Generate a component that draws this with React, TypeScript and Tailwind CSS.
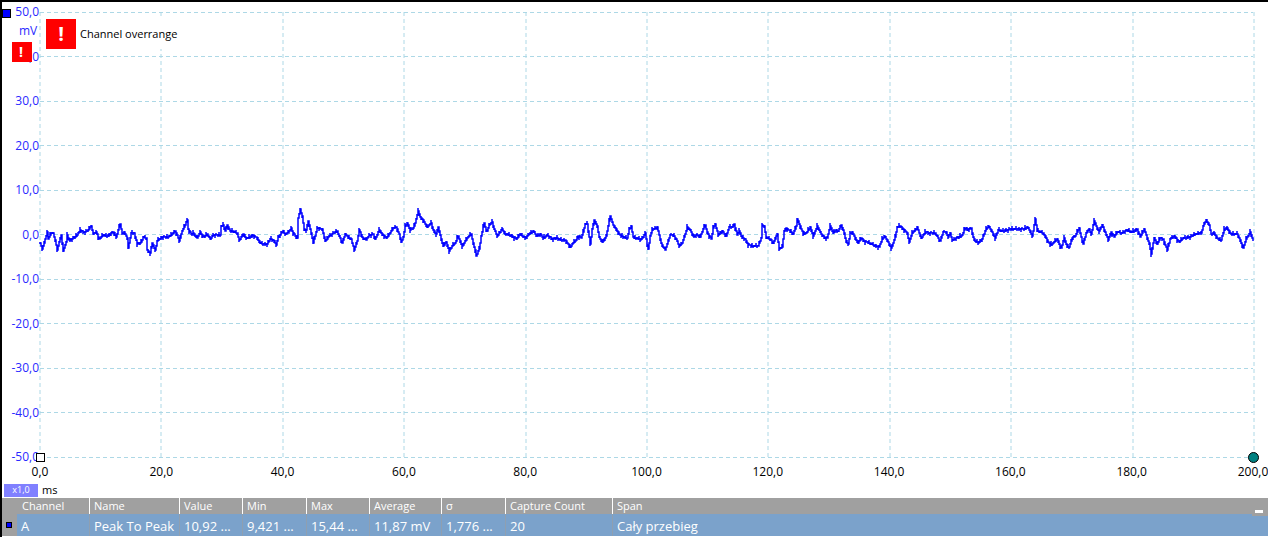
const SCALE_Y = ['50,0', '40,0', '30,0', '20,0', '10,0', '0,0', '-10,0', '-20,0', '-30,0', '-40,0', '-50,0']
const SCALE_X = ['0,0', '20,0', '40,0', '60,0', '80,0', '100,0', '120,0', '140,0', '160,0', '180,0', '200,0']

const PLOT_WIDTH = 1213
const PLOT_HEIGHT = 445

// x, distance below the zero line
const SAMPLES = [
    0,9, 2,15, 4,9, 7,-2, 8,5, 11,-1, 13,-1, 15,6, 17,16, 18,12, 21,1, 23,17, 26,8, 27,1, 29,6, 33,4, 37,1, 40,-4, 43,-2, 47,-3,
    51,-8, 53,0, 56,-2, 59,5, 63,1, 66,2, 70,0, 73,-2, 76,3, 78,-4, 80,-10, 82,-1, 84,-2, 87,4, 88,14, 91,-1, 94,-1, 97,10,
    101,8, 103,3, 106,4, 107,16, 110,19, 112,9, 115,16, 117,7, 122,3, 125,3, 128,3, 132,0, 135,-3, 137,1, 139,7, 142,-3, 144,-7,
    147,-14, 148,-5, 151,0, 153,-1, 157,4, 160,-2, 163,3, 167,0, 170,5, 173,1, 177,1, 180,1, 181,-8, 183,-9, 185,-3, 187,-9,
    190,-3, 193,-3, 197,-1, 199,6, 203,0, 206,4, 210,3, 213,1, 217,4, 220,9, 223,10, 227,10, 230,5, 233,6, 236,11, 238,3, 243,-3,
    245,0, 248,-1, 251,-6, 253,-1, 257,4, 258,-16, 260,-25, 262,-18, 264,-5, 266,-4, 268,-13, 271,-1, 273,9, 277,-6, 282,-5,
    285,7, 289,2, 293,-1, 297,-3, 299,2, 302,9, 305,0, 308,3, 311,5, 314,16, 317,7, 319,-4, 322,3, 326,6, 329,1, 333,0, 335,5,
    339,-4, 343,1, 346,4, 350,-1, 353,-6, 356,-7, 359,0, 361,8, 363,3, 365,-8, 367,-11, 370,-4, 373,-6, 375,-11, 377,-19, 378,-23,
    380,-17, 383,-14, 387,-7, 391,-11, 393,-4, 396,0, 398,-7, 401,5, 403,12, 406,8, 409,17, 412,12, 415,9, 418,2, 422,12, 424,9,
    427,4, 431,0, 433,9, 435,16, 436,22, 439,15, 441,2, 444,-11, 446,-4, 447,-3, 449,-9, 452,-12, 454,-5, 457,2, 462,-5, 465,0,
    470,1, 476,5, 480,0, 485,4, 489,0, 493,-3, 497,2, 500,0, 503,4, 507,1, 512,5, 517,4, 521,6, 525,6, 528,10, 530,13, 533,9,
    536,6, 538,2, 541,4, 543,-2, 545,-10, 547,-10, 549,3, 550,10, 552,-5, 554,-14, 557,-8, 559,3, 562,8, 566,2, 568,-8, 570,-18,
    573,-9, 576,-5, 579,0, 583,3, 587,4, 589,-5, 591,-8, 593,3, 597,4, 600,6, 603,3, 605,-1, 607,11, 608,15, 610,2, 612,-4,
    617,-7, 619,1, 621,9, 625,16, 628,7, 630,1, 633,1, 636,5, 639,12, 642,9, 645,0, 647,-7, 650,-4, 653,2, 657,1, 660,3, 663,-5,
    665,-9, 667,-2, 671,5, 673,-6, 675,-10, 678,1, 682,-3, 686,2, 689,-7, 692,-7, 694,-10, 697,1, 699,-3, 702,4, 705,5, 708,11,
    713,12, 718,12, 721,4, 722,-9, 724,-8, 726,3, 730,5, 733,9, 737,0, 739,15, 742,13, 744,-3, 746,-6, 750,-3, 753,0, 756,-8,
    757,-15, 760,-8, 763,0, 767,-2, 770,-7, 773,2, 777,-8, 781,0, 785,4, 787,4, 790,-8, 793,-1, 796,-4, 798,-3, 801,-9, 804,-1,
    806,8, 808,10, 810,-1, 812,-2, 815,4, 818,9, 821,4, 825,8, 828,8, 830,9, 833,11, 837,12, 839,13, 842,5, 844,2, 847,6, 851,14,
    853,9, 855,3, 857,-7, 860,-8, 863,-5, 867,-1, 869,8, 872,-1, 875,-4, 877,-7, 881,4, 885,-2, 890,-1, 895,-1, 898,4, 900,7,
    903,-2, 906,-2, 908,3, 910,-1, 912,6, 917,4, 922,1, 925,-6, 928,-4, 931,-6, 933,3, 935,7, 938,9, 942,5, 945,-3, 948,-8,
    951,-4, 955,4, 958,-4, 963,-3, 970,-5, 974,-5, 978,-5, 983,-5, 987,-7, 990,-3, 992,2, 994,-9, 995,-15, 997,-4, 1000,-2,
    1003,-1, 1006,4, 1010,11, 1013,9, 1017,5, 1021,14, 1024,4, 1027,13, 1029,13, 1032,4, 1035,2, 1039,-6, 1041,3, 1043,10,
    1046,-1, 1049,-5, 1051,0, 1054,-13, 1057,-6, 1059,-3, 1062,-9, 1065,-2, 1068,6, 1071,-2, 1074,3, 1077,-2, 1082,-1, 1087,-4,
    1092,-2, 1097,-5, 1100,3, 1104,-5, 1107,4, 1109,9, 1111,20, 1114,4, 1117,10, 1120,4, 1123,5, 1127,16, 1130,5, 1134,2,
    1139,8, 1143,4, 1150,3, 1155,0, 1161,-1, 1163,-8, 1166,-14, 1169,-9, 1171,0, 1174,-1, 1177,4, 1181,6, 1184,-5, 1187,-6,
    1191,0, 1197,0, 1200,6, 1203,14, 1206,5, 1210,-2, 1213,7,
]

// how far the noise reaches above and below the signal, per pixel column
const NOISE = [[1, 1], [3, 0], [0, 2], [1, 0], [2, 2], [0, 1], [1, 3], [2, 0], [0, 0], [1, 2], [3, 1], [0, 2], [1, 1]]

function tracePath() {
    let path = ''
    let step = 0
    for (let i = 0; i < SAMPLES.length - 2; i += 2) {
        const [x0, y0, x1, y1] = SAMPLES.slice(i, i + 4)
        for (let x = x0; x < x1; x++) {
            const y = Math.round(y0 + ((y1 - y0) * (x - x0)) / (x1 - x0) + PLOT_HEIGHT / 2 - 0.5)
            const [up, down] = NOISE[step % NOISE.length]
            path += path ? `H${x}` : `M${x} ${y}`
            path += `V${y - up}V${y + down}V${y}`
            step++
        }
    }
    return `${path}H${PLOT_WIDTH}V229`
}

const TRACE = tracePath()

const COLUMNS = [
    { name: 'Channel', value: 'A', width: 'w-[72px]' },
    { name: 'Name', value: 'Peak To Peak', width: 'w-[90px]' },
    { name: 'Value', value: '10,92 ...', width: 'w-[63px]' },
    { name: 'Min', value: '9,421 ...', width: 'w-[64px]' },
    { name: 'Max', value: '15,44 ...', width: 'w-[63px]' },
    { name: 'Average', value: '11,87 mV', width: 'w-[72px]' },
    { name: 'σ', value: '1,776 ...', width: 'w-[64px]' },
    { name: 'Capture Count', value: '20', width: 'w-[107px]' },
    { name: 'Span', value: 'Cały przebieg', width: 'w-auto' },
]

function Plot() {
    return (
        <svg
            className="block h-full w-full overflow-visible"
            viewBox={`0 0 ${PLOT_WIDTH} ${PLOT_HEIGHT}`}
            preserveAspectRatio="none"
            role="img"
            aria-label="Channel A"
        >
            <g stroke="#add8e6" strokeDasharray="4 3">
                {SCALE_Y.map((_, i) => {
                    const y = Math.floor(i * 44.5) + 0.5
                    return <line key={i} x1={0} x2={PLOT_WIDTH} y1={y} y2={y} />
                })}
                {SCALE_X.map((_, i) => {
                    const x = Math.round(i * 121.4)
                    return <line key={i} x1={x} x2={x} y1={0} y2={PLOT_HEIGHT} />
                })}
            </g>
            <path d={TRACE} fill="none" stroke="#0000ff" strokeWidth={1.5} />
        </svg>
    )
}

export default function App() {
    return (
        <div className="flex h-screen min-h-80 flex-col overflow-hidden border-t-2 border-l-2 border-black bg-white font-['Open_Sans','Noto_Sans',sans-serif] text-xs text-black">
            <main className="relative flex min-h-0 flex-1 pt-[10px] pr-[15px]">
                <div className="-my-[10px] flex w-[38px] flex-col items-end justify-between pr-px text-[#2a2aff]">
                    {SCALE_Y.map((label) => (
                        <span key={label} className="h-5 leading-5">{label}</span>
                    ))}
                </div>
                <div className="relative min-w-0 flex-1">
                    <Plot />
                    <span className="absolute -bottom-[5px] -left-1 size-[9px] border border-black bg-white" />
                    <span className="absolute -right-[6px] -bottom-[6px] size-[11px] rounded-full border border-black bg-[#008080]" />
                    <div className="absolute top-[7px] left-[6px] flex items-center gap-1 bg-white pr-4 text-[11px]">
                        <span className="flex size-[30px] items-center justify-center bg-[#ff0000] text-xl font-bold text-white">!</span>
                        Channel overrange
                    </div>
                </div>
                <span className="absolute top-[7px] left-0 size-[9px] border border-black bg-[#0000ff]" />
                <span className="absolute top-[19px] left-[17px] leading-5 text-[#2a2aff]">mV</span>
                <span className="absolute top-10 left-[10px] flex size-5 items-center justify-center bg-[#ff0000] pr-[2px] text-sm font-bold text-white">!</span>
            </main>

            <div className="mt-1 mr-[15px] ml-[38px] flex h-[21px] items-center justify-between">
                {SCALE_X.map((label) => (
                    <span key={label} className="flex w-0 justify-center whitespace-nowrap">{label}</span>
                ))}
            </div>
            <div className="flex h-4 items-center gap-1 pl-[2px] text-[11px]">
                <button type="button" className="h-[13px] w-[34px] bg-[#8080ff] text-[9px] leading-3 text-white">x1,0</button>
                ms
            </div>

            <div className="relative border-b border-white bg-[#a0a0a0] pl-[15px]">
                <table className="w-full table-fixed border-collapse text-left text-white">
                    <thead>
                        <tr>
                            {COLUMNS.map((col) => (
                                <th key={col.name} className={`${col.width} h-4 border-l border-white p-0 pl-1 text-[11px] leading-4 font-normal first:border-[#a0a0a0]`}>
                                    {col.name}
                                </th>
                            ))}
                        </tr>
                    </thead>
                    <tbody>
                        <tr className="bg-[#7ba2cb]">
                            {COLUMNS.map((col) => (
                                <td key={col.name} className="h-[22px] border-l border-[#8f9fb0] p-0 pt-[2px] pl-1 text-[13px] leading-5 whitespace-nowrap first:border-[#7ba2cb] first:pl-[3px]">
                                    {col.value}
                                </td>
                            ))}
                        </tr>
                    </tbody>
                </table>
                <span className="absolute bottom-[8px] left-1 size-[6px] border border-black bg-[#0000ff]" />
                <button type="button" aria-label="Minimize" className="absolute top-3 right-0 flex h-[6px] w-4 items-start justify-start bg-[#a0a0a0] pl-[3px]">
                    <span className="h-[3px] w-2 bg-white" />
                </button>
            </div>
        </div>
    )
}
